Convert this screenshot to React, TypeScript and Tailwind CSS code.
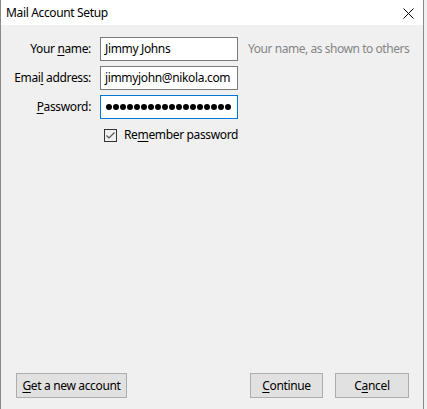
import React from "react";

const U = ({ children }: { children: React.ReactNode }) => (
  <span className="underline underline-offset-[2px] decoration-1">{children}</span>
);

export default function App() {
  const font = { fontFamily: '"Segoe UI", "Noto Sans", "Open Sans", sans-serif' };
  return (
    <div className="w-[427px] h-[409px] bg-[#f0f0f0] text-[12px] tracking-[-0.35px] text-black" style={font}>
      <div className="w-[424px] h-[409px] border-l border-r border-[#8a8a8a] flex flex-col">
        <div className="h-[25px] bg-white flex items-center justify-between pl-[5px] pr-[9px]">
          <span className="text-[12px] leading-none">Mail Account Setup</span>
          <svg width="11" height="11" viewBox="0 0 11 11" className="mt-[1px]">
            <path d="M0.5 0.5 L10.5 10.5 M10.5 0.5 L0.5 10.5" stroke="#000" strokeWidth="1" />
          </svg>
        </div>
        <div className="flex-1 flex flex-col">
          <div className="flex flex-col pt-[12px] gap-[5px]">
            <div className="flex items-center h-[24px]">
              <div className="w-[91px] text-right pr-[1px]">
                Your <U>n</U>ame:
              </div>
              <div className="ml-[8px] w-[138px] h-[24px] border border-[#7a7a7a] bg-white flex items-center px-[4px]">
                Jimmy Johns
              </div>
              <div className="ml-[10px] text-[#858585] tracking-[-0.45px]">Your name, as shown to others</div>
            </div>
            <div className="flex items-center h-[24px]">
              <div className="w-[91px] text-right pr-[1px]">
                Emai<U>l</U> address:
              </div>
              <div className="ml-[8px] w-[138px] h-[24px] border border-[#7a7a7a] bg-white flex items-center px-[4px] overflow-hidden whitespace-nowrap">
                jimmyjohn@nikola.com
              </div>
            </div>
            <div className="flex items-center h-[24px]">
              <div className="w-[91px] text-right pr-[1px]">
                <U>P</U>assword:
              </div>
              <div className="ml-[8px] w-[138px] h-[24px] border border-[#0078d7] bg-white flex items-center pl-[5px] gap-[1px]">
                {Array.from({ length: 18 }).map((_, i) => (
                  <span key={i} className="w-[6px] h-[6px] rounded-full bg-black" />
                ))}
              </div>
            </div>
          </div>
          <div className="flex items-center mt-[7px] ml-[103px]">
            <div className="w-[13px] h-[13px] border border-[#333333] bg-[#f0f0f0] flex items-center justify-center">
              <svg width="11" height="11" viewBox="0 0 11 11">
                <path d="M1.5 5.5 L4 8 L9.5 2.5" stroke="#555" strokeWidth="1.2" fill="none" />
              </svg>
            </div>
            <span className="ml-[7px]">
              Re<U>m</U>ember password
            </span>
          </div>
          <div className="flex-1" />
          <div className="flex items-center mb-[11px] pl-[15px] pr-[14px]">
            <button className="w-[111px] h-[25px] bg-[#e1e1e1] border border-[#adadad] flex items-center justify-center">
              <span><U>G</U>et a new account</span>
            </button>
            <div className="flex-1" />
            <button className="w-[73px] h-[25px] bg-[#e1e1e1] border border-[#adadad] flex items-center justify-center">
              <span><U>C</U>ontinue</span>
            </button>
            <button className="ml-[12px] w-[74px] h-[25px] bg-[#e1e1e1] border border-[#adadad] flex items-center justify-center">
              <span>C<U>a</U>ncel</span>
            </button>
          </div>
        </div>
      </div>
    </div>
  );
}
